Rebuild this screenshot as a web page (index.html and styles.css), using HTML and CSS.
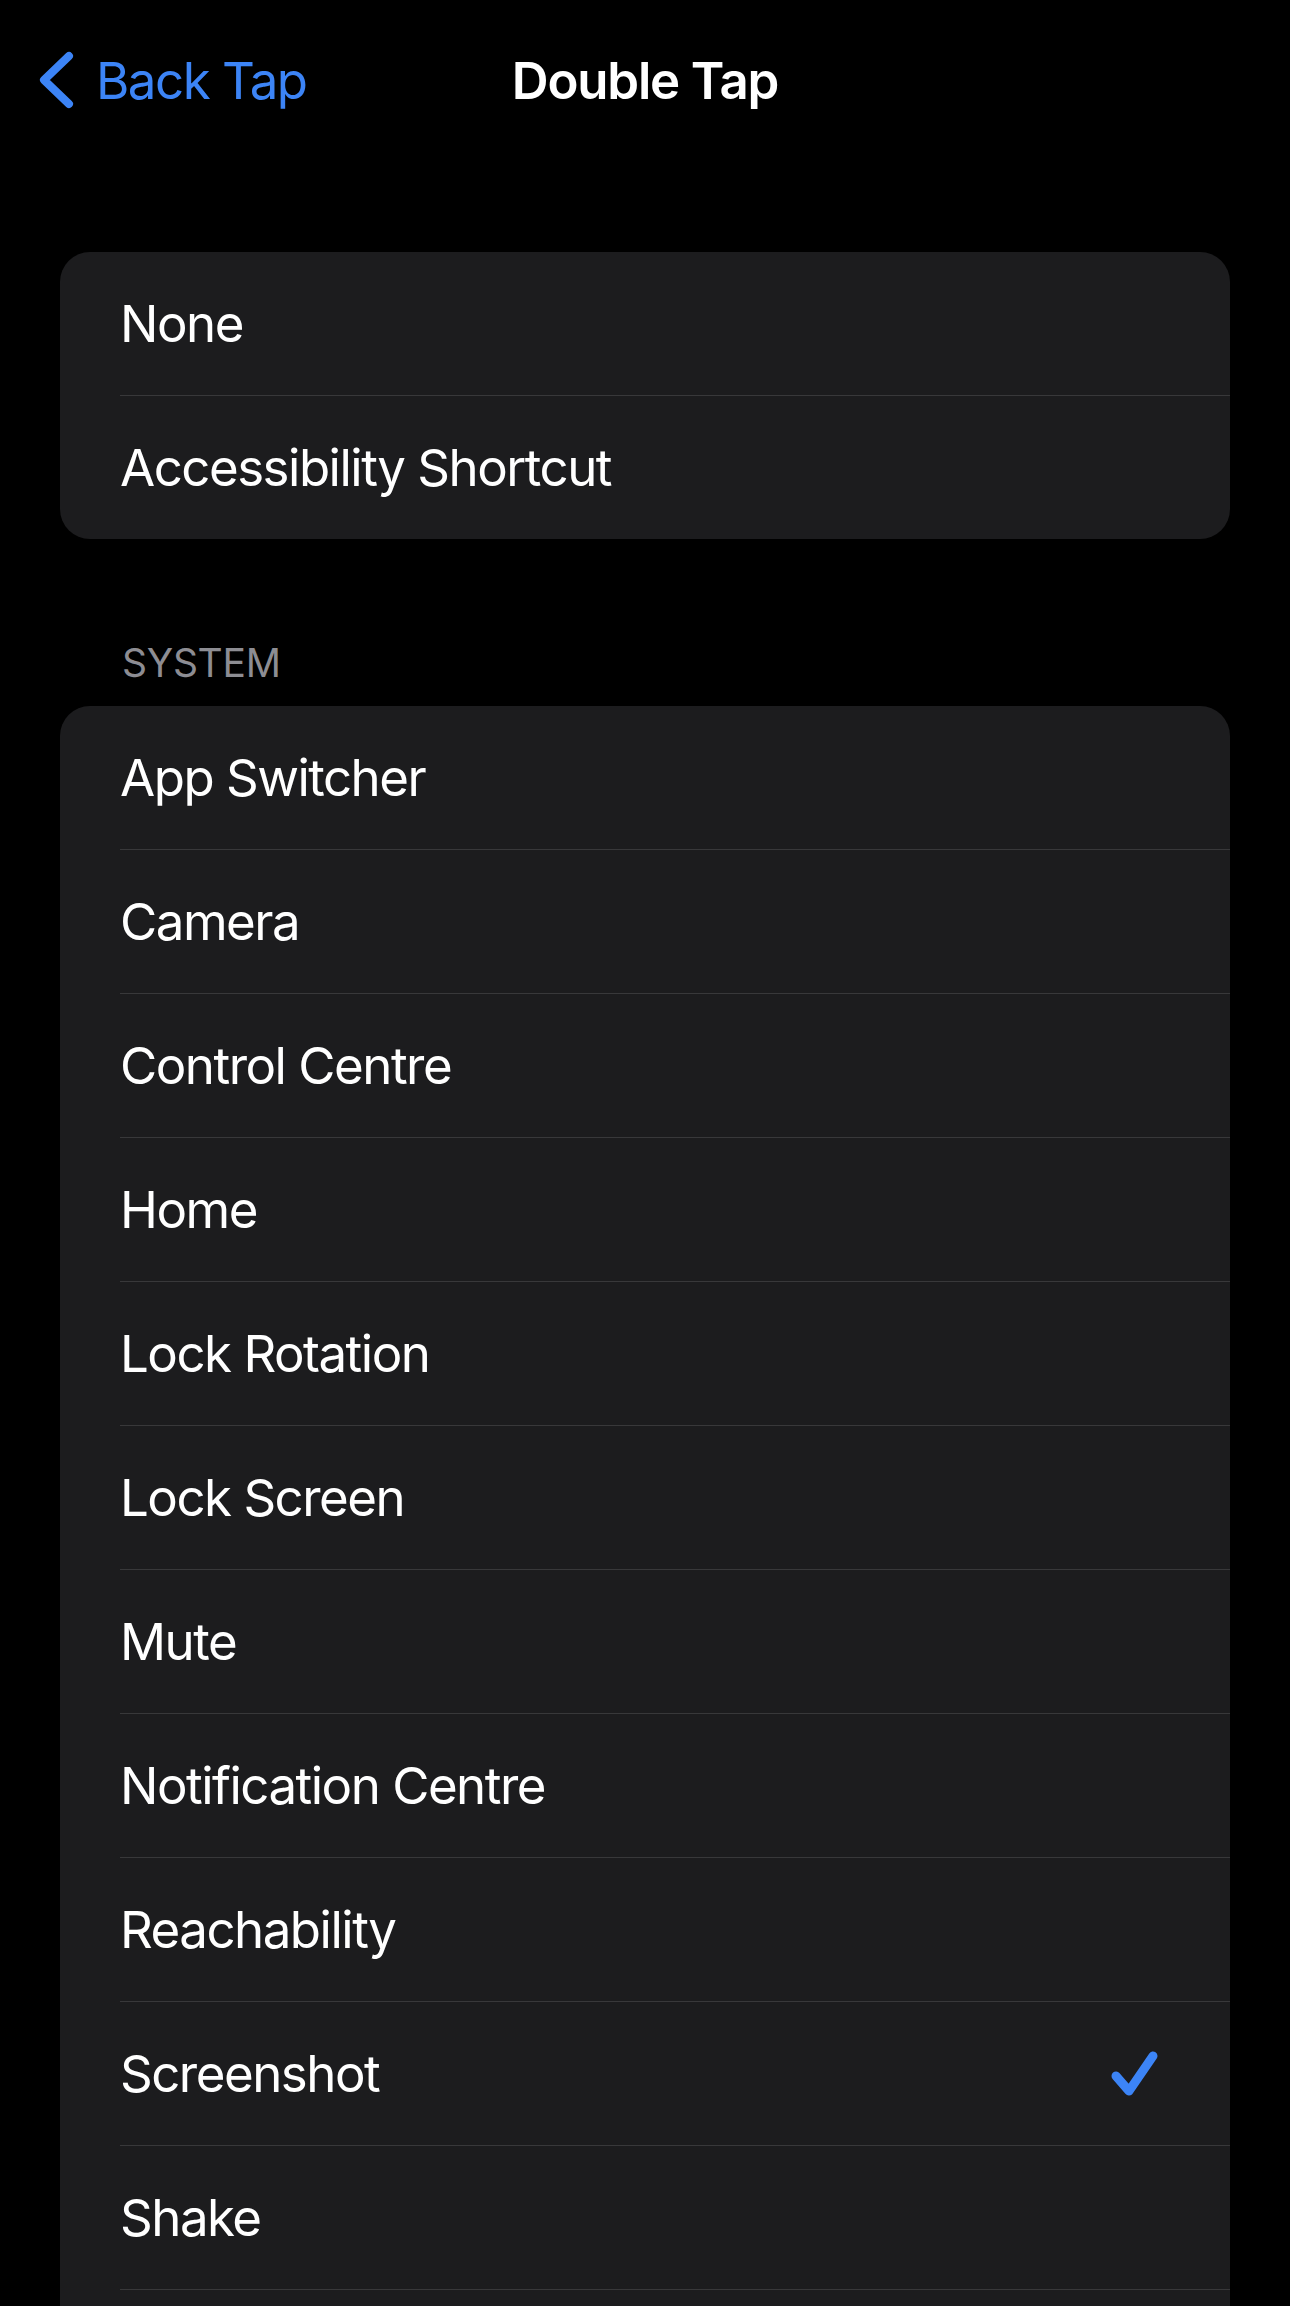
FILE: index.html
```html
<!DOCTYPE html>
<html lang="en">
<head>
    <meta charset="UTF-8">
    <meta name="viewport" content="width=device-width, initial-scale=1.0">
    <title>Double Tap</title>
    <link rel="stylesheet" href="styles.css">
</head>
<body>
<div id="screen">
    <div class="nav-bar">
        <a class="back-btn" href="#">
            <svg class="chevron" width="40" height="60" viewBox="0 0 40 60">
                <polyline points="33,6 8,30 33,54" fill="none" stroke="currentColor" stroke-width="8" stroke-linecap="round" stroke-linejoin="round"/>
            </svg>
            <span>Back Tap</span>
        </a>
        <h1 class="nav-title">Double Tap</h1>
        <div></div>
    </div>

    <div class="content">
        <ul class="group">
            <li class="row"><span>None</span></li>
            <li class="row"><span>Accessibility Shortcut</span></li>
        </ul>

        <p class="section-label">SYSTEM</p>
        <ul class="group">
            <li class="row"><span>App Switcher</span></li>
            <li class="row"><span>Camera</span></li>
            <li class="row"><span>Control Centre</span></li>
            <li class="row"><span>Home</span></li>
            <li class="row"><span>Lock Rotation</span></li>
            <li class="row"><span>Lock Screen</span></li>
            <li class="row"><span>Mute</span></li>
            <li class="row"><span>Notification Centre</span></li>
            <li class="row"><span>Reachability</span></li>
            <li class="row selected">
                <span>Screenshot</span>
                <svg class="check" width="54" height="50" viewBox="0 0 54 50">
                    <polyline points="8,27 21,42 45,7" fill="none" stroke="currentColor" stroke-width="9" stroke-linecap="round" stroke-linejoin="round"/>
                </svg>
            </li>
            <li class="row"><span>Shake</span></li>
            <!-- next row continues below the fold -->
            <li class="row"></li>
        </ul>
    </div>
</div>
</body>
</html>
```

FILE: styles.css
```css
* {
    box-sizing: border-box;
}

body {
    margin: 0;
    background: #000;
    font-family: Inter, "Noto Sans", sans-serif;
    color: #fff;
}

#screen {
    width: 1290px;
    height: 2306px;
    overflow: hidden;
    background: #000;
}

.nav-bar {
    display: grid;
    grid-template-columns: 1fr auto 1fr;
    align-items: center;
    height: 162px;
    padding-bottom: 2px;
}

.back-btn {
    display: flex;
    align-items: center;
    gap: 20px;
    padding-left: 36px;
    color: #3c84f6;
    text-decoration: none;
    font-size: 51px;
    letter-spacing: -1.5px;
}

.chevron {
    display: block;
}

.nav-title {
    margin: 0;
    font-size: 51px;
    font-weight: 600;
    letter-spacing: -1.2px;
}

.content {
    padding: 90px 60px 0;
}

.group {
    list-style: none;
    margin: 0;
    padding: 0;
    background: #1c1c1e;
    border-radius: 30px;
    overflow: hidden;
}

.row {
    display: flex;
    align-items: center;
    justify-content: space-between;
    height: 144px;
    margin-left: 60px;
    padding-right: 68px;
    border-bottom: 1px solid #38383a;
    font-size: 51px;
    letter-spacing: -1.5px;
}

.row:last-child {
    border-bottom: none;
    height: 143px;
}

.check {
    display: block;
    color: #3c84f6;
}

.section-label {
    margin: 0;
    padding: 101px 0 20px 62px;
    font-size: 39px;
    line-height: 46px;
    color: #8d8d93;
    letter-spacing: -0.3px;
}
```
